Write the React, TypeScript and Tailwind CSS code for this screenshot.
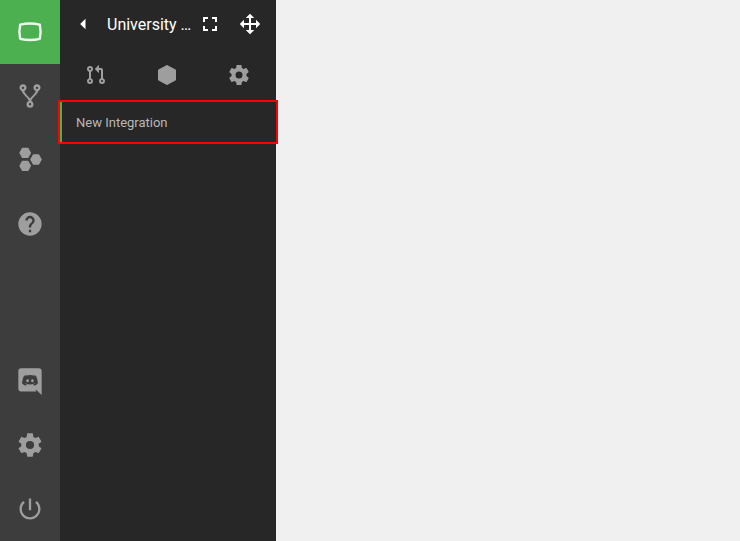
import type { ReactNode } from "react";

const paths = {
  cog: "M12,15.5A3.5,3.5 0 0,1 8.5,12A3.5,3.5 0 0,1 12,8.5A3.5,3.5 0 0,1 15.5,12A3.5,3.5 0 0,1 12,15.5M19.43,12.97C19.47,12.65 19.5,12.33 19.5,12C19.5,11.67 19.47,11.34 19.43,11L21.54,9.37C21.73,9.22 21.78,8.95 21.66,8.73L19.66,5.27C19.54,5.05 19.27,4.96 19.05,5.05L16.56,6.05C16.04,5.66 15.5,5.32 14.87,5.07L14.5,2.42C14.46,2.18 14.25,2 14,2H10C9.75,2 9.54,2.18 9.5,2.42L9.13,5.07C8.5,5.32 7.96,5.66 7.44,6.05L4.95,5.05C4.73,4.96 4.46,5.05 4.34,5.27L2.34,8.73C2.21,8.95 2.27,9.22 2.46,9.37L4.57,11C4.53,11.34 4.5,11.67 4.5,12C4.5,12.33 4.53,12.65 4.57,12.97L2.46,14.63C2.27,14.78 2.21,15.05 2.34,15.27L4.34,18.73C4.46,18.95 4.73,19.03 4.95,18.95L7.44,17.94C7.96,18.34 8.5,18.68 9.13,18.93L9.5,21.58C9.54,21.82 9.75,22 10,22H14C14.25,22 14.46,21.82 14.5,21.58L14.87,18.93C15.5,18.67 16.04,18.34 16.56,17.94L19.05,18.95C19.27,19.03 19.54,18.95 19.66,18.73L21.66,15.27C21.78,15.05 21.73,14.78 21.54,14.63L19.43,12.97Z",
  help: "M15.07,11.25L14.17,12.17C13.45,12.89 13,13.5 13,15H11V14.5C11,13.39 11.45,12.39 12.17,11.67L13.41,10.41C13.78,10.05 14,9.55 14,9C14,7.89 13.1,7 12,7A2,2 0 0,0 10,9H8A4,4 0 0,1 12,5A4,4 0 0,1 16,9C16,9.88 15.64,10.67 15.07,11.25M13,19H11V17H13M12,2A10,10 0 0,0 2,12A10,10 0 0,0 12,22A10,10 0 0,0 22,12C22,6.47 17.5,2 12,2Z",
  hexagon: "M21,16.5C21,16.88 20.79,17.21 20.47,17.38L12.57,21.82C12.41,21.94 12.21,22 12,22C11.79,22 11.59,21.94 11.43,21.82L3.53,17.38C3.21,17.21 3,16.88 3,16.5V7.5C3,7.12 3.21,6.79 3.53,6.62L11.43,2.18C11.59,2.06 11.79,2 12,2C12.21,2 12.41,2.06 12.57,2.18L20.47,6.62C20.79,6.79 21,7.12 21,7.5V16.5Z",
  power: "M13 3h-2v10h2V3zm4.83 2.17l-1.42 1.42C17.99 7.86 19 9.81 19 12c0 3.87-3.13 7-7 7s-7-3.13-7-7c0-2.19 1.01-4.14 2.58-5.42L6.17 5.17C4.23 6.82 3 9.26 3 12c0 4.97 4.03 9 9 9s9-4.03 9-9c0-2.74-1.23-5.18-3.17-6.83z",
  discord: "M22,24L16.75,19L17.38,21H4.5A2.5,2.5 0 0,1 2,18.5V3.5A2.5,2.5 0 0,1 4.5,1H19.5A2.5,2.5 0 0,1 22,3.5V24M12,6.8C9.32,6.8 7.44,7.95 7.44,7.95C8.47,7.03 10.27,6.5 10.27,6.5L10.1,6.33C8.41,6.36 6.88,7.53 6.88,7.53C5.16,11.12 5.27,14.22 5.27,14.22C6.67,16.03 8.75,15.9 8.75,15.9L9.46,15C8.21,14.73 7.42,13.62 7.42,13.62C7.42,13.62 9.3,14.9 12,14.9C14.7,14.9 16.58,13.62 16.58,13.62C16.58,13.62 15.79,14.73 14.54,15L15.25,15.9C15.25,15.9 17.33,16.03 18.73,14.22C18.73,14.22 18.84,11.12 17.12,7.53C17.12,7.53 15.59,6.36 13.9,6.33L13.73,6.5C13.73,6.5 15.53,7.03 16.56,7.95C16.56,7.95 14.68,6.8 12,6.8M9.93,10.59C10.58,10.59 11.11,11.16 11.1,11.86C11.1,12.55 10.58,13.13 9.93,13.13C9.29,13.13 8.77,12.55 8.77,11.86C8.77,11.16 9.28,10.59 9.93,10.59M14.1,10.59C14.75,10.59 15.27,11.16 15.27,11.86C15.27,12.55 14.75,13.13 14.1,13.13C13.46,13.13 12.94,12.55 12.94,11.86C12.94,11.16 13.45,10.59 14.1,10.59Z",
  back: "M14.5,6.7L9.2,12L14.5,17.3V6.7Z",
  fullscreen: "M5,5H10V7H7V10H5V5M14,5H19V10H17V7H14V5M17,14H19V19H14V17H17V14M10,17V19H5V14H7V17H10Z",
  move: "M13,6V11H18V7.75L22.25,12L18,16.25V13H13V18H16.25L12,22.25L7.75,18H11V13H6V16.25L1.75,12L6,7.75V11H11V6H7.75L12,1.75L16.25,6H13Z",
  pull: "M6,3A3,3 0 0,1 9,6C9,7.31 8.17,8.42 7,8.83V15.17C8.17,15.58 9,16.69 9,18A3,3 0 0,1 6,21A3,3 0 0,1 3,18C3,16.69 3.83,15.58 5,15.17V8.83C3.83,8.42 3,7.31 3,6A3,3 0 0,1 6,3M6,5A1,1 0 0,0 5,6A1,1 0 0,0 6,7A1,1 0 0,0 7,6A1,1 0 0,0 6,5M6,17A1,1 0 0,0 5,18A1,1 0 0,0 6,19A1,1 0 0,0 7,18A1,1 0 0,0 6,17M21,18A3,3 0 0,1 18,21A3,3 0 0,1 15,18C15,16.69 15.83,15.58 17,15.17V7H15V10.25L10.75,6L15,1.75V5H17A2,2 0 0,1 19,7V15.17C20.17,15.58 21,16.69 21,18M18,17A1,1 0 0,0 17,18A1,1 0 0,0 18,19A1,1 0 0,0 19,18A1,1 0 0,0 18,17Z",
  fork: "M6,2A3,3 0 0,1 9,5C9,6.28 8.19,7.38 7.06,7.81C7.15,8.27 7.39,8.83 8,9.63C9,10.92 11,12.83 12,14.17C13,12.83 15,10.92 16,9.63C16.61,8.83 16.85,8.27 16.94,7.81C15.81,7.38 15,6.28 15,5A3,3 0 0,1 18,2A3,3 0 0,1 21,5C21,6.32 20.14,7.45 18.95,7.85C18.87,8.37 18.64,9 18,9.83C17,11.17 15,13.08 14,14.38C13.39,15.17 13.15,15.73 13.06,16.19C14.19,16.62 15,17.72 15,19A3,3 0 0,1 12,22A3,3 0 0,1 9,19C9,17.72 9.81,16.62 10.94,16.19C10.85,15.73 10.61,15.17 10,14.38C9,13.08 7,11.17 6,9.83C5.36,9 5.13,8.37 5.05,7.85C3.86,7.45 3,6.32 3,5A3,3 0 0,1 6,2M6,4A1,1 0 0,0 5,5A1,1 0 0,0 6,6A1,1 0 0,0 7,5A1,1 0 0,0 6,4M18,4A1,1 0 0,0 17,5A1,1 0 0,0 18,6A1,1 0 0,0 19,5A1,1 0 0,0 18,4M12,18A1,1 0 0,0 11,19A1,1 0 0,0 12,20A1,1 0 0,0 13,19A1,1 0 0,0 12,18Z",
};

function Icon({ name, large = false }: { name: keyof typeof paths; large?: boolean }) {
  return (
    <svg viewBox="0 0 24 24" fill="currentColor" className={large ? "size-7 shrink-0" : "size-6 shrink-0"}>
      <path d={paths[name]} />
    </svg>
  );
}

function HexagonCluster() {
  return (
    <svg viewBox="0 0 28 28" fill="currentColor" stroke="currentColor" strokeWidth="1.4" strokeLinejoin="round" className="size-7">
      <path d="M6.6 2.4H11.8L14.3 6.9L11.8 11.4H6.6L4.1 6.9Z" />
      <path d="M17.4 9H22.6L25.1 13.5L22.6 18H17.4L14.9 13.5Z" />
      <path d="M6.6 15.4H11.8L14.3 19.9L11.8 24.4H6.6L4.1 19.9Z" />
    </svg>
  );
}

function ScreenLogo() {
  return (
    <svg viewBox="0 0 28 28" fill="none" stroke="currentColor" strokeWidth="2.4" strokeLinejoin="round" className="size-7">
      <path d="M4.2 6.6Q14 4.3 23.8 6.6Q25.4 14 23.8 20.8Q14 23.1 4.2 20.8Q2.6 14 4.2 6.6Z" />
    </svg>
  );
}

function NavButton({ label, active = false, children }: { label: string; active?: boolean; children: ReactNode }) {
  return (
    <button
      aria-label={label}
      className={
        active
          ? "flex h-16 w-full items-center justify-center bg-[#4caf50] text-white/90"
          : "flex h-16 w-full items-center justify-center text-[#9e9e9e]"
      }
    >
      {children}
    </button>
  );
}

export default function App() {
  return (
    <div className="flex h-screen w-screen overflow-hidden bg-[#f0f0f0] font-[Roboto,sans-serif]">
      <nav className="flex w-[60px] shrink-0 flex-col justify-between bg-[#3d3d3d]">
        <div>
          <NavButton label="Home" active><ScreenLogo /></NavButton>
          <NavButton label="Flows"><Icon name="fork" large /></NavButton>
          <NavButton label="Nodes"><HexagonCluster /></NavButton>
          <NavButton label="Help"><Icon name="help" large /></NavButton>
        </div>
        <div className="pb-[0.5px]">
          <NavButton label="Discord"><Icon name="discord" large /></NavButton>
          <NavButton label="Settings"><Icon name="cog" large /></NavButton>
          <NavButton label="Power"><Icon name="power" large /></NavButton>
        </div>
      </nav>
      <aside className="flex w-[216px] shrink-0 flex-col bg-[#272727]">
        <header className="flex h-12 items-center pl-[11px] text-white">
          <Icon name="back" />
          <h1 className="ml-3 w-[88px] whitespace-nowrap pt-0.5 text-base font-normal">University …</h1>
          <span className="ml-[3px] flex"><Icon name="fullscreen" /></span>
          <span className="ml-4 flex"><Icon name="move" /></span>
        </header>
        <div className="grid h-[54px] grid-cols-3 items-center justify-items-center pr-px text-[#9e9e9e]">
          <Icon name="pull" />
          <Icon name="hexagon" />
          <Icon name="cog" />
        </div>
        <div className="flex h-10 items-center border-l-2 border-[#4caf50] pt-0.5 pl-3.5 text-[13px] text-[#b8b8b8] outline-2 outline-[#ff0000]">
          New Integration
        </div>
      </aside>
      <main className="flex-1" />
    </div>
  );
}
